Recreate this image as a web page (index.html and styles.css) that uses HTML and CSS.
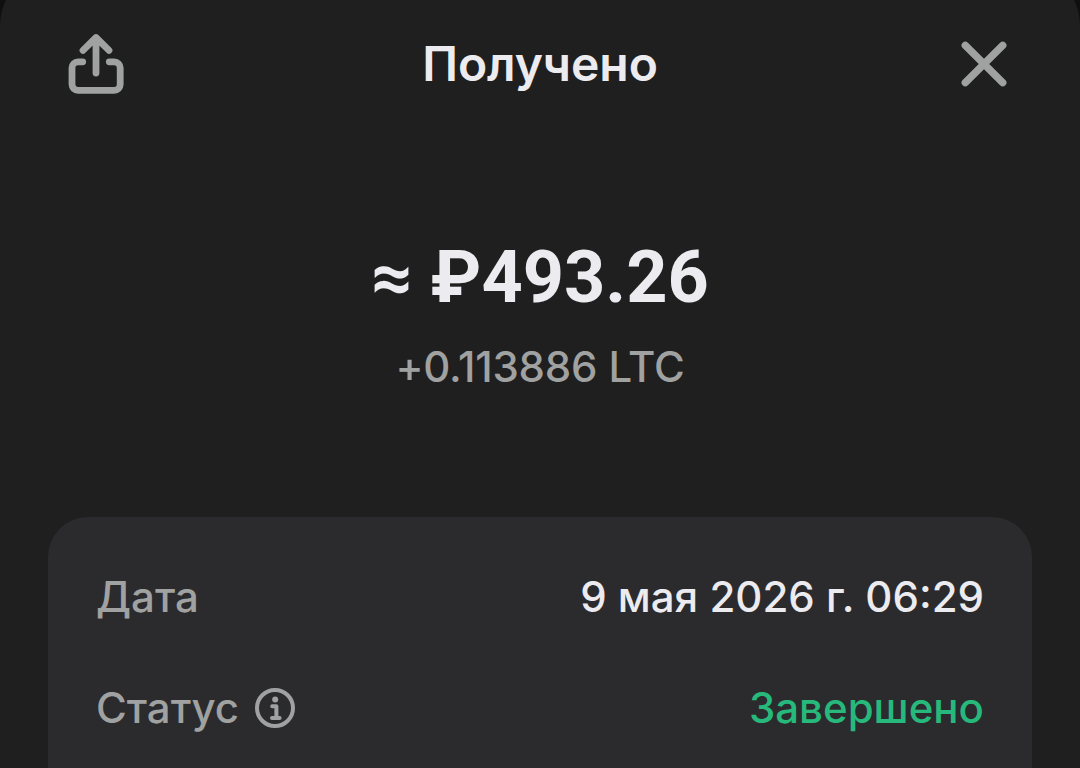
FILE: index.html
```html
<!DOCTYPE html>
<html lang="ru">
<head>
<meta charset="utf-8">
<title>Получено</title>
<link rel="stylesheet" href="styles.css">
</head>
<body>
<main class="sheet">
  <header class="header">
    <svg class="share" viewBox="0 0 64 68" aria-hidden="true"><path d="M18.7 31.8H14a6 6 0 0 0-6 6V54.3a6 6 0 0 0 6 6H50.2a6 6 0 0 0 6-6V37.8a6 6 0 0 0-6-6H45.3M32 43V8M19 20.3 32 7.5 45 20.3"/></svg>
    <h1 class="title">Получено</h1>
    <svg class="close" viewBox="0 0 56 56" aria-hidden="true"><path d="M9.3 9.3 46.7 46.7M46.7 9.3 9.3 46.7"/></svg>
  </header>
  <section class="summary">
    <div class="amount">≈ ₽493.26</div>
    <div class="crypto">+0.113886 LTC</div>
  </section>
  <section class="card">
    <div class="row"><span class="label">Дата</span><span class="value">9 мая 2026 г. 06:29</span></div>
    <div class="row"><span class="label">Статус<svg class="info" viewBox="0 0 44 44" aria-hidden="true"><circle cx="22" cy="23" r="18"/><circle class="dot" cx="22.2" cy="14.4" r="3"/><path d="M19.2 21.2H23.4V33M19 33H26.6"/></svg></span><span class="value done">Завершено</span></div>
  </section>
</main>
</body>
</html>
```
FILE: styles.css
```css
* { box-sizing: border-box; }
body { margin: 0; background: #0f0f0f; font-family: Inter, sans-serif; overflow: hidden; }
.sheet { height: 802px; margin-top: -34px; padding: 34px 48px 0; background: #1f1f1f; display: flex; flex-direction: column; border-radius: 60px 60px 0 0; }
.header { height: 128px; flex: none; display: flex; align-items: center; justify-content: space-between; padding: 0 16px; }
.header svg { fill: none; stroke: #a0a1a1; stroke-width: 6.8; stroke-linecap: round; stroke-linejoin: round; }
.share { width: 64px; height: 68px; }
.close { width: 56px; height: 56px; margin: 0 4px; }
.header .close { stroke-width: 7.4; }
.title { margin: 0; color: #ebebf0; font-size: 48px; font-weight: 600; line-height: 60px; letter-spacing: -0.05px; }
.summary { height: 389px; flex: none; padding-top: 107px; text-align: center; }
.amount { color: #ebebf0; font: 700 72px/86px Roboto, sans-serif; }
.crypto { margin-top: 16px; color: #a0a1a1; font-size: 42px; font-weight: 450; line-height: 60px; letter-spacing: -0.18px; }
.card { flex: 1; min-height: 0; padding: 48px 48px 0; background: #2b2b2d; border-radius: 40px 40px 0 0; }
.row { height: 62px; margin-bottom: 49px; display: flex; align-items: center; justify-content: space-between; font-size: 42px; }
.label { display: flex; align-items: center; gap: 14px; color: #a0a1a1; font-weight: 450; }
.info { width: 44px; height: 44px; fill: none; stroke: #a0a1a1; stroke-width: 4; stroke-linecap: round; stroke-linejoin: round; }
.dot { fill: #a0a1a1; stroke: none; }
.value { color: #ebebf0; font-weight: 500; }
.done { color: #27b97c; }
```
